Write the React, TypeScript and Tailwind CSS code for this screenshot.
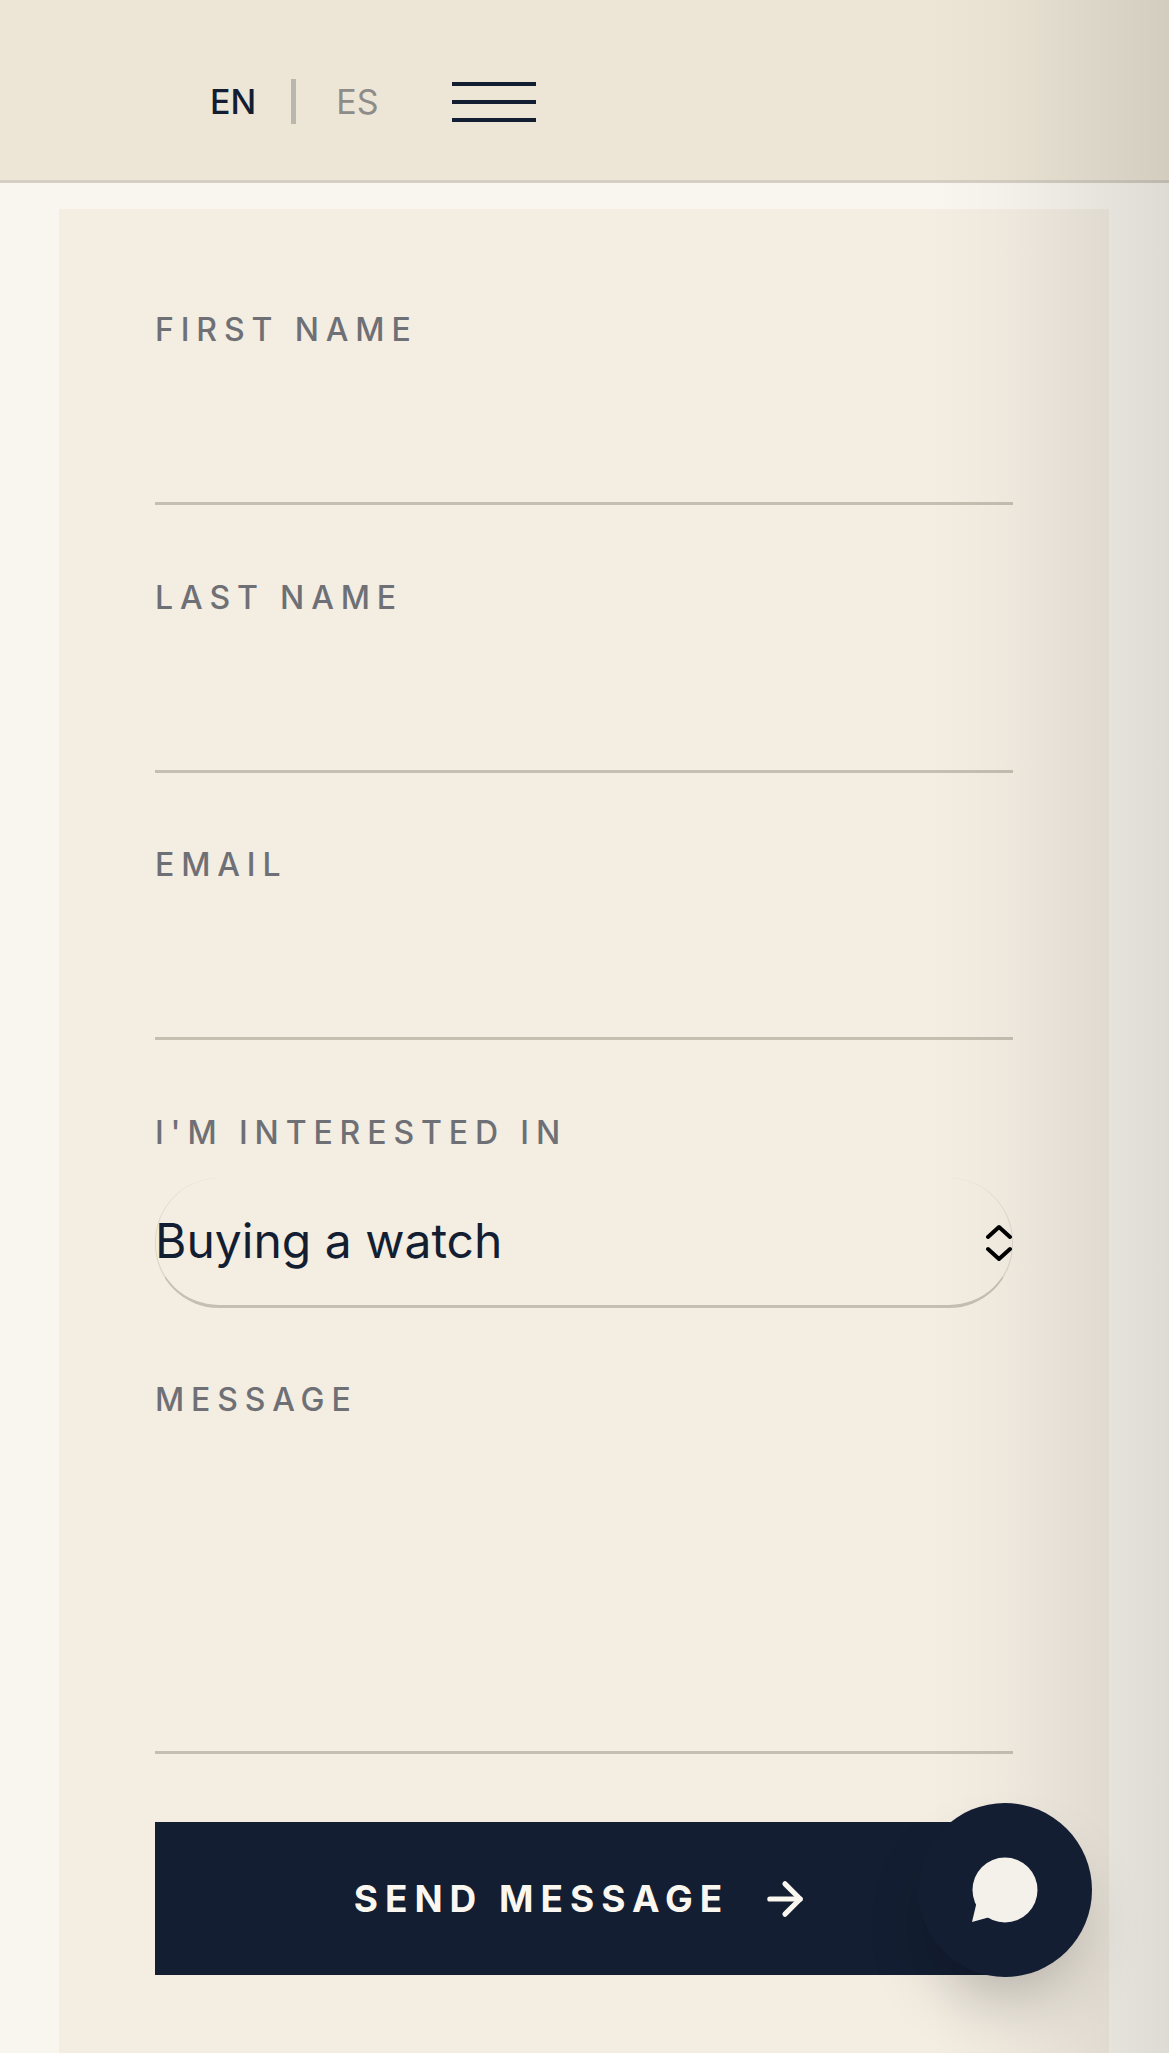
import { ArrowRight } from "lucide-react";

const labelClass =
  "block h-[40px] text-[32px] leading-[40px] font-medium tracking-[0.215em] text-[#6e7075]";
const lineClass =
  "mt-[25px] block w-full border-b-[3px] border-[#c5bfb2] bg-transparent outline-none";

function Field({ label }: { label: string }) {
  return (
    <div>
      <label className={labelClass}>{label}</label>
      <input type="text" className={`${lineClass} h-[130px]`} />
    </div>
  );
}

export default function App() {
  return (
    <div
      className="relative h-[2053px] w-full overflow-hidden bg-[#f9f6ef] text-[#131e32]"
      style={{ fontFamily: "Inter, 'Noto Sans', sans-serif" }}
    >
      {/* header */}
      <header className="flex h-[183px] items-center border-b-[3px] border-[#d5cfc3] bg-[#ede6d7] pl-[210px] pt-[23px]">
        <span className="text-[34px] font-medium">EN</span>
        <span className="ml-[35px] mr-[40px] h-[45px] w-[5px] bg-[#bab7af]" />
        <span className="text-[34px] text-[#8d8c88]">ES</span>
        <button className="ml-[74px] flex h-[40px] w-[84px] flex-col justify-between">
          <span className="block h-[4px] w-full bg-[#131e32]" />
          <span className="block h-[4px] w-full bg-[#131e32]" />
          <span className="block h-[4px] w-full bg-[#131e32]" />
        </button>
      </header>

      {/* form card */}
      <main className="ml-[59px] mt-[26px] h-[1900px] w-[1050px] bg-[#f3ede2] px-[96px] pt-[101px]">
        <div className="flex flex-col gap-[72.5px]">
          <Field label="FIRST NAME" />
          <Field label="LAST NAME" />
          <Field label="EMAIL" />

          <div>
            <label className={labelClass}>I'M INTERESTED IN</label>
            <div className="relative mt-[25px] flex h-[130px] items-center rounded-[64px] border-x border-b-[3px] border-x-[#ddd7cb] border-b-[#c5bfb2]">
              <span className="-ml-px text-[48px] leading-none">Buying a watch</span>
              <svg
                width="26"
                height="38"
                viewBox="0 0 26 38"
                fill="none"
                stroke="#000"
                strokeWidth="4"
                strokeLinecap="round"
                strokeLinejoin="round"
                className="absolute right-0 top-[46px]"
              >
                <path d="M2 13 13 3l11 10" />
                <path d="M2 25l11 10 11-10" />
              </svg>
            </div>
          </div>

          <div>
            <label className={labelClass}>MESSAGE</label>
            <textarea className={`${lineClass} h-[309px] resize-none`} />
          </div>
        </div>

        <button className="mt-[68px] flex h-[153px] w-full items-center justify-center gap-[30px] bg-[#131e32] pr-[3px] text-[37px] font-bold tracking-[7px] text-[#faf7f0]">
          SEND MESSAGE
          <ArrowRight size={52} strokeWidth={2.4} />
        </button>
      </main>

      {/* right edge shade */}
      <div className="pointer-events-none absolute inset-y-0 right-0 w-[240px] bg-gradient-to-r from-transparent via-black/[0.02] via-30% to-black/[0.11]" />

      {/* chat bubble */}
      <button className="absolute bottom-[76px] right-[77px] flex h-[174px] w-[174px] items-center justify-center rounded-full bg-[#131e32] shadow-[0_36px_70px_-22px_rgba(0,0,0,0.3)]">
        <svg width="68" height="68" viewBox="0 0 68 68" fill="#f4f1ea">
          <circle cx="34" cy="34" r="32.5" />
          <path d="M6 45 1 66l18-5z" />
        </svg>
      </button>
    </div>
  );
}
